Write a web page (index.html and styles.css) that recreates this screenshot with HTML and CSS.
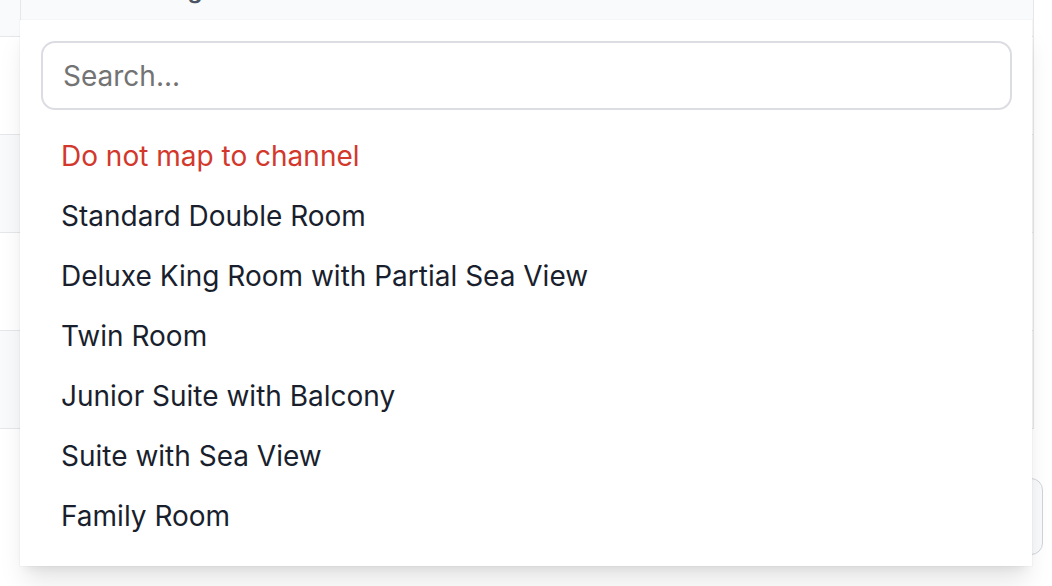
FILE: index.html
```html
<!DOCTYPE html>
<html lang="en">
<head>
    <meta charset="UTF-8">
    <meta name="viewport" content="width=device-width, initial-scale=1.0">
    <title>Room mapping</title>
    <link rel="stylesheet" href="styles.css">
</head>
<body>

    <div class="page">

        <!-- table behind the dropdown -->
        <div class="table">
            <div class="row head">
                <div class="cell lead"></div>
                <div class="cell main">Listing</div>
            </div>
            <div class="row">
                <div class="cell lead"></div>
                <div class="cell main"></div>
            </div>
            <div class="row striped">
                <div class="cell lead"></div>
                <div class="cell main"></div>
            </div>
            <div class="row">
                <div class="cell lead"></div>
                <div class="cell main"></div>
            </div>
            <div class="row striped">
                <div class="cell lead"></div>
                <div class="cell main"></div>
            </div>
        </div>

        <div class="footer">
            <button class="btn">Save</button>
        </div>

        <!-- dropdown -->
        <div class="dropdown">
            <input type="text" class="search" placeholder="Search...">
            <ul class="options">
                <li class="option unmap">Do not map to channel</li>
                <li class="option">Standard Double Room</li>
                <li class="option">Deluxe King Room with Partial Sea View</li>
                <li class="option">Twin Room</li>
                <li class="option">Junior Suite with Balcony</li>
                <li class="option">Suite with Sea View</li>
                <li class="option">Family Room</li>
            </ul>
        </div>

    </div>

</body>
</html>
```

FILE: styles.css
```css
* {
    box-sizing: border-box;
}

body {
    font-family: Inter, 'Noto Sans', sans-serif;
    background-color: #ffffff;
    margin: 0;
    padding: 0;
    overflow: hidden;
}

.page {
    position: relative;
    display: flow-root;
    width: 1052px;
    height: 586px;
    overflow: hidden;
}

.table {
    width: 1034px;
}

.row {
    display: flex;
    height: 98px;
    border-bottom: 1px solid #e5e7eb;
}

.row.head {
    height: 57px;
    margin-top: -20px;
    background-color: #f9fafb;
}

.row.striped {
    background-color: #f9fafb;
}

.cell.lead {
    width: 21px;
    border-right: 1px solid #e5e7eb;
}

.cell.main {
    flex: 1;
    border-right: 1px solid #e5e7eb;
}

.row.head .cell.main {
    padding: 0 0 0 104px;
    font-size: 24px;
    line-height: 20px;
    font-weight: 600;
    color: #4b5563;
}

.footer {
    display: flex;
    justify-content: flex-end;
    padding: 49px 9px 0 0;
}

.btn {
    width: 180px;
    height: 77px;
    border: 1px solid #d1d5db;
    border-radius: 12px;
    background-color: #f9fafb;
    font-family: inherit;
    font-size: 24px;
    color: #374151;
}

.dropdown {
    position: absolute;
    top: 20px;
    left: 20px;
    width: 1012px;
    padding: 21px 20px 20px 21px;
    background-color: #ffffff;
    box-shadow: 0 20px 25px -5px rgba(0, 0, 0, 0.1), 0 8px 10px -6px rgba(0, 0, 0, 0.08), 0 0 0 1px rgba(0, 0, 0, 0.02);
}

.search {
    display: block;
    width: 971px;
    height: 69px;
    padding: 0 20px;
    border: 2px solid #dcdde2;
    border-radius: 14px;
    font-family: inherit;
    font-size: 28px;
    color: #111827;
    outline: none;
}

.search::placeholder {
    color: #737373;
}

.options {
    list-style: none;
    margin: 16px 0 0 0;
    padding: 0;
}

.option {
    height: 60px;
    line-height: 60px;
    padding-left: 20px;
    font-size: 28px;
    color: #1a1f2e;
}

.option.unmap {
    color: #d2382c;
}
```
